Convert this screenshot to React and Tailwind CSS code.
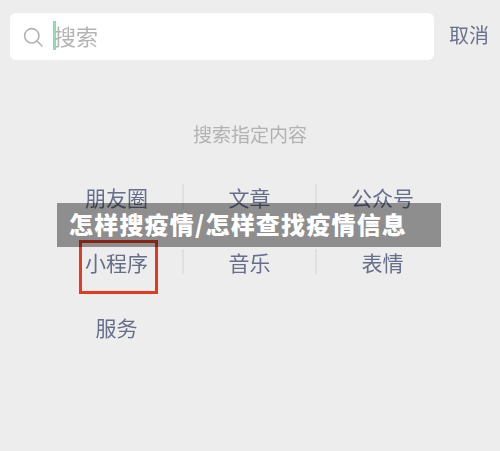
import React from 'react';

const cjk = { fontFamily: '"Noto Sans CJK SC", sans-serif' };

const rows = [
  ['朋友圈', '文章', '公众号'],
  ['小程序', '音乐', '表情'],
  ['服务'],
];

const SearchIcon = () => (
  <svg width="20" height="20" viewBox="0 0 20 20" fill="none" stroke="#b4b4b4" strokeWidth="1.6" strokeLinecap="round" className="shrink-0">
    <circle cx="8.8" cy="8.8" r="7.2" />
    <path d="M14.2 14.2 L19 19" />
  </svg>
);

const App = () => {
  return (
    <div className="relative w-[500px] h-[451px] overflow-hidden bg-[#ededed]" style={cjk}>
      <div className="blur-[0.5px]">
        <header className="flex items-center pt-[13px] pl-[10px]">
          <div className="w-[425px] h-[47px] bg-white rounded-[6px] flex items-center pl-[13px]">
            <SearchIcon />
            <span className="w-[3px] h-[29px] bg-[#8fdcae] ml-[10px] -mt-[2px]"></span>
            <span className="text-[22px] leading-none text-[#b4b4b4] -ml-[2px] -mt-[4px]">搜索</span>
          </div>
          <button className="w-[66px] pl-[4px] text-center text-[20px] leading-none text-[#6a718b] -mt-[3px]">取消</button>
        </header>

        <p className="mt-[63px] text-center text-[19px] leading-[22px] text-[#b2b2b2]">搜索指定内容</p>

        <div className="mt-[40px] pl-[50px] flex flex-col gap-[41px]">
          {rows.map((row, i) => (
            <div key={i} className="flex h-[24px]">
              {row.map((label, j) => (
                <div key={label} className="relative w-[133px] flex items-center justify-center">
                  <span className="text-[21px] leading-none text-[#666e8a] whitespace-nowrap">{label}</span>
                  {j < 2 && row.length > 1 && (
                    <span className="absolute -right-[1px] -top-[1px] w-[2px] h-[25px] bg-[#e0e0e0]"></span>
                  )}
                </div>
              ))}
            </div>
          ))}
        </div>
      </div>

      <div className="absolute left-[79px] top-[240px] w-[79px] h-[54px] border-[3px] border-[#e23c20]"></div>

      <div className="absolute left-[57px] top-[203px] w-[384px] h-[44px] bg-black/40 flex items-center pl-[12px]">
        <span className="text-[24px] leading-none font-black text-white tracking-[1.2px] whitespace-nowrap -mt-[3px]">怎样搜疫情/怎样查找疫情信息</span>
      </div>
    </div>
  );
};

export default App;
